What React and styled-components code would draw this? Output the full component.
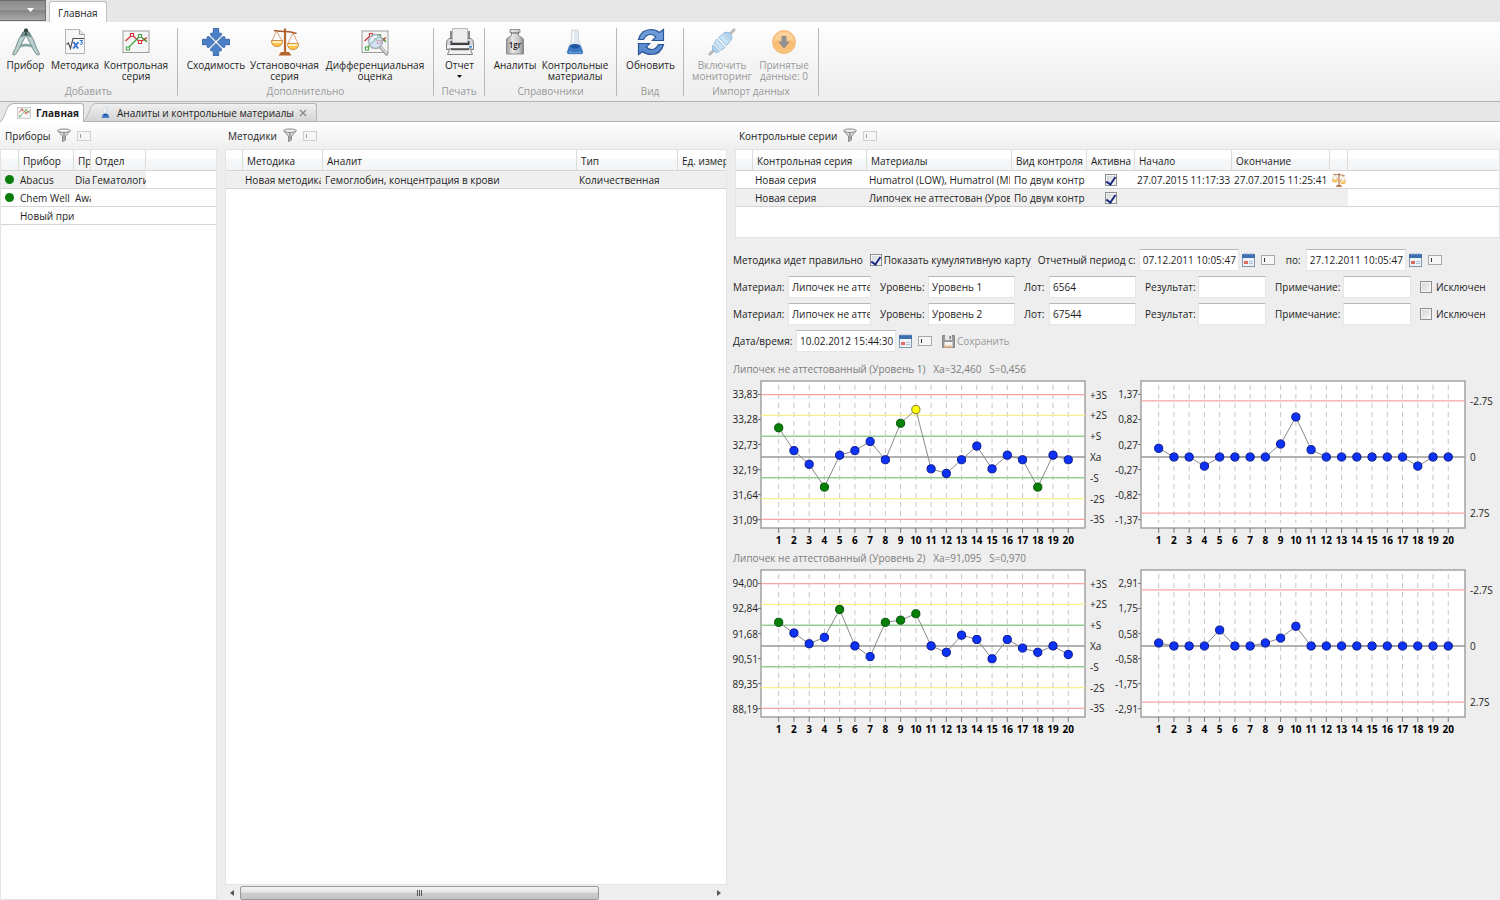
import React from "react";
import styled, { createGlobalStyle } from "styled-components";

const GlobalStyle = createGlobalStyle`
  * {
    box-sizing: border-box;
  }

  body {
    margin: 0;
    background: #eee;
    color: #1c1c1c;
    font: 10px/12px "Open Sans", "Noto Sans", sans-serif;
  }

  button,
  input {
    font: inherit;
    color: inherit;
  }

  button {
    border: 0;
    padding: 0;
    background: none;
  }

  svg {
    display: block;
    flex: none;
  }
`;

const Page = styled.div`
  display: flex;
  flex-direction: column;
  min-height: 100vh;
`;

/* ---------- ribbon ---------- */

const TitleBar = styled.header`
  display: flex;
  align-items: flex-end;
  gap: 3px;
  height: 22px;
  background: #e7e7e7;
`;

const AppMenuButton = styled.button`
  display: flex;
  align-items: center;
  justify-content: flex-end;
  align-self: flex-start;
  width: 46px;
  height: 21px;
  padding-right: 11px;
  border: 1px solid #6f6f6f;
  border-left: 0;
  background: linear-gradient(#8a8a8a, #9d9d9d 45%, #858585 50%, #a9a9a9);
`;

const RibbonTab = styled.button`
  height: 21px;
  padding: 2px 8px 0;
  border: 1px solid #c0c0c0;
  border-bottom: 0;
  border-radius: 3px 3px 0 0;
  background: #fff;
`;

const Ribbon = styled.nav`
  display: flex;
  padding: 6px 0 5px;
  border-bottom: 1px solid #b4b4b4;
  background: linear-gradient(#fff, #f3f3f3 60%, #eee);
`;

const RibbonGroup = styled.section`
  display: flex;
  flex-direction: column;
  justify-content: space-between;
  width: ${(p) => p.$width}px;
  height: 68px;
  border-right: 1px solid #b9b9b9;
`;

const GroupButtons = styled.div`
  display: flex;
  padding-left: ${(p) => p.$indent || 0}px;
`;

const GroupTitle = styled.div`
  color: #999;
  line-height: 9px;
  text-align: center;
`;

const RibbonButton = styled.button`
  display: flex;
  flex-direction: column;
  align-items: center;
  gap: 4px;
  width: ${(p) => p.$width}px;
  line-height: 11px;
  white-space: pre;

  &:disabled {
    color: #999;
  }

  &:disabled svg {
    opacity: 0.6;
  }
`;

/* ---------- document tabs ---------- */

const DocTabs = styled.div`
  display: flex;
  align-items: flex-end;
  height: 20px;
  border-bottom: 1px solid #b4b4b4;
  background: #e7e7e7;
`;

const DocTab = styled.div`
  display: flex;
  height: ${(p) => (p.$active ? 19 : 18)}px;
  margin-bottom: ${(p) => (p.$active ? -1 : 0)}px;
  font-weight: ${(p) => (p.$active ? 700 : 400)};
`;

const DocTabBody = styled.div`
  display: flex;
  align-items: center;
  gap: 5px;
  padding-right: ${(p) => (p.$active ? 4 : 9)}px;
  border: solid #b4b4b4;
  border-width: 1px 1px 0 0;
  border-radius: 0 3px 0 0;
  background: ${(p) => (p.$active ? "#fff" : "linear-gradient(#f0f0f0, #d4d4d4)")};

  button {
    font-weight: inherit;
  }
`;

/* ---------- panels and tables ---------- */

const Workspace = styled.main`
  display: flex;
  flex: 1;
  background: linear-gradient(#fff, #eee 28px);
`;

const Panel = styled.section`
  display: flex;
  flex-direction: column;
  flex: ${(p) => p.$grow} 1 0;
  min-width: 0;
  margin-left: ${(p) => p.$gap || 0}px;
`;

const PanelHead = styled.div`
  display: flex;
  align-items: center;
  gap: 6px;
  height: 27px;
  padding-left: ${(p) => p.$indent}px;
`;

const PanelTitle = styled.h2`
  margin: 0;
  font-size: 10px;
  font-weight: 400;
`;

const TableBox = styled.div`
  flex: ${(p) => (p.$height ? "none" : "1 1 0")};
  height: ${(p) => (p.$height ? p.$height + "px" : "auto")};
  margin-left: ${(p) => p.$indent || 0}px;
  overflow: hidden;
  border: 1px solid #e4e4e4;
  background: #fff;
`;

const Table = styled.table`
  width: ${(p) => p.$width || "100%"};
  border-collapse: separate;
  border-spacing: 0;
  table-layout: fixed;
`;

const Th = styled.th`
  height: 21px;
  padding: 1px 0 0 4px;
  overflow: hidden;
  border-right: 1px solid #dcdcdc;
  border-bottom: 1px solid #d5d5d5;
  background: linear-gradient(#fff 40%, #f7f8f9 45%, #f3f4f6);
  font-weight: 400;
  text-align: left;
  white-space: nowrap;

  &:last-child {
    border-right: 0;
  }
`;

const Td = styled.td`
  height: 18px;
  padding: 0 ${(p) => (p.$tight ? 0 : 2)}px 0 ${(p) => (p.$tight ? 1 : 2)}px;
  border-bottom: 1px solid #d5d5d5;
  background: ${(p) => (p.$selected ? "#efefef" : "#fff")};
`;

const CellText = styled.div`
  overflow: hidden;
  white-space: nowrap;
`;

const Center = styled.div`
  display: flex;
  justify-content: center;
`;

const StatusDot = styled.span`
  display: block;
  width: 9px;
  height: 9px;
  margin-left: 3px;
  border-radius: 50%;
  background: #0a7d0a;
`;

/* small "collapsed editor" box that stands next to filters and dates */
const MiniToggle = styled.button`
  display: flex;
  align-items: center;
  width: 14px;
  height: 10px;
  padding-left: 2px;
  border: 1px solid ${(p) => (p.$faint ? "#d0d0d0" : "#a8a8a8")};
  background: #f6f6f6;

  &::before {
    content: "";
    width: 1px;
    height: 4px;
    background: ${(p) => (p.$faint ? "#999" : "#333")};
  }
`;

const ScrollBar = styled.div`
  display: flex;
  align-items: center;
  height: 15px;
  padding: 0 6px 0 5px;
  background: #eee;
`;

const ScrollTrack = styled.div`
  flex: 1;
  height: 14px;
  margin: 0 16px 0 5px;
`;

const ScrollThumb = styled.div`
  display: flex;
  align-items: center;
  justify-content: center;
  gap: 1px;
  width: 78%;
  height: 14px;
  border: 1px solid #999;
  border-radius: 2px;
  background: linear-gradient(#f4f4f4, #e4e4e4 45%, #cdcdcd 50%, #c4c4c4);

  i {
    width: 1px;
    height: 6px;
    background: #555;
  }
`;

/* ---------- form ---------- */

const Form = styled.form`
  display: flex;
  flex-direction: column;
  gap: 5px;
  padding: 11px 7px 0 6px;
`;

const FormRow = styled.div`
  display: flex;
  align-items: center;
  gap: ${(p) => p.$gap || 9}px;
  height: 22px;
  white-space: nowrap;
`;

const Field = styled.label`
  display: flex;
  align-items: center;

  span {
    width: ${(p) => p.$label}px;
  }
`;

const TextInput = styled.input`
  width: ${(p) => p.$width}px;
  height: 22px;
  padding: 0 0 0 3px;
  border: 1px solid #e6e6e6;
  border-top-color: #b8b8b8;
  background: #fff;
  outline: 0;
`;

const CheckInput = styled.input`
  appearance: none;
  display: flex;
  justify-content: center;
  width: 12px;
  height: 12px;
  margin: 0;
  border: 1px solid #8e8f8f;
  background: linear-gradient(135deg, #cfd3d8, #f8f8f8);
  box-shadow: inset 0 0 0 1px #f4f4f4;

  &:checked::after {
    content: "";
    width: 4px;
    height: 8px;
    border: solid #1c2a80;
    border-width: 0 2px 2px 0;
    transform: rotate(35deg);
  }
`;

const CheckLabel = styled.label`
  display: flex;
  align-items: center;
  gap: ${(p) => p.$gap || 2}px;
`;

const DateTools = styled.div`
  display: flex;
  align-items: center;
  gap: 6px;
  margin: 0 4px 0 -4px;
`;

const SaveButton = styled.button`
  display: flex;
  align-items: center;
  gap: 2px;
  margin-left: 4px;

  &:disabled {
    color: #999;
  }
`;

/* ---------- charts ---------- */

const Charts = styled.div`
  display: flex;
  flex-direction: column;
  padding: 9px 7px 0 6px;
`;

const ChartTitle = styled.h3`
  margin: 0;
  color: #7c7c7c;
  font-size: 10px;
  font-weight: 400;
  line-height: 16px;
  white-space: pre;
`;

const ChartPair = styled.div`
  display: grid;
  grid-template-columns: 1fr 1fr;
`;

const ChartSvg = styled.svg`
  width: 100%;
  overflow: visible;

  text {
    fill: #1c1c1c;
    font-size: 10px;
  }

  .x {
    fill: #000;
    font-weight: 700;
    text-anchor: middle;
  }

  .tick {
    text-anchor: end;
  }
`;

/* ---------- icons ---------- */

const CompassIcon = () => (
  <svg width="28" height="28" viewBox="0 0 28 28">
    <path d="M6.500 17.500Q14 14.500 21.500 17.500L22 19.500Q14 16.500 6 19.500Z" fill="#86a9a7" stroke="#6d908d" strokeWidth="0.500" />
    <path d="M10.500 5L14.500 6Q10.500 14 6.500 22L3.500 26.500L1 27L0.800 25L3.500 20Q6 11 10.500 5Z" fill="#b7cfcd" stroke="#64827f" strokeWidth="0.800" />
    <path d="M17.500 5L13.500 6Q17.500 14 21.500 22L24.500 26.500L27 27L27.200 25L24.500 20Q22 11 17.500 5Z" fill="#b7cfcd" stroke="#64827f" strokeWidth="0.800" />
    <path d="M11 4Q14 1.500 17 4L18.500 8.500Q14 5.500 9.500 8.500Z" fill="#7b9d9b" stroke="#4b6663" strokeWidth="0.700" />
    <rect x="12" y="0.500" width="4" height="4" rx="1.500" fill="#344646" />
    <circle cx="14" cy="6" r="1.300" fill="#3a4c4b" />
  </svg>
);

const FormulaIcon = () => (
  <svg width="28" height="28" viewBox="0 0 28 28">
    <path d="M4.500 1.500H18.500L23.500 6.500V25.500H4.500Z" fill="#f7f7f7" stroke="#b5b5b5" />
    <path d="M18.500 1.500V6.500H23.500" fill="#e4e4e4" stroke="#a5a5a5" />
    <path d="M5.500 16.500L7.500 15L9.500 20.500L12 10.500H23" fill="none" stroke="#4d4d4d" strokeWidth="1.100" />
    <path d="M12.500 14L17 20.500M17.500 14L12 20.500" stroke="#2f6fd0" strokeWidth="1.800" />
    <path d="M18.700 12.500H21.500L20 14.200Q22 14.300 21.500 15.700Q20.800 17 18.700 16" fill="none" stroke="#2f6fd0" strokeWidth="1" />
  </svg>
);

const SeriesShape = () => (
  <>
    <rect x="1" y="3" width="26" height="21.500" fill="#f5f5f5" stroke="#9d9d9d" />
    <path d="M3.500 13L10 7L18 14L25 9.500" fill="none" stroke="#cf3838" strokeWidth="1.300" />
    <path d="M6 20L18 8L25 14" fill="none" stroke="#48a548" strokeWidth="1.300" />
    <path d="M8.500 5.500h3v3h-3ZM16.500 12.500h3v3h-3Z" fill="#fff" stroke="#cf3838" strokeWidth="1.200" />
    <path d="M4.500 19h3v3h-3ZM16.500 6.500h3v3h-3Z" fill="#fff" stroke="#48a548" strokeWidth="1.200" />
    <path d="M21.500 10l3 3M24.500 10l-3 3" stroke="#8a6a2c" />
  </>
);

const SeriesIcon = ({ size = 28 }) => (
  <svg width={size} height={size} viewBox="0 0 28 28">
    <SeriesShape />
  </svg>
);

const DiffIcon = () => (
  <svg width="28" height="28" viewBox="0 0 28 28">
    <SeriesShape />
    <path d="M19.500 19L25.500 26" stroke="#9c9c9c" strokeWidth="3.400" strokeLinecap="round" />
    <path d="M19.500 18.500L25.500 25.500" stroke="#e2e2e2" strokeWidth="1.200" strokeLinecap="round" />
    <circle cx="14.500" cy="13.500" r="7" fill="#c6dcf3" fillOpacity="0.700" stroke="#a9b0b8" strokeWidth="1.500" />
    <path d="M9.500 13Q11 8.500 16 8.700" fill="none" stroke="#fff" strokeWidth="1.500" />
  </svg>
);

const ConvergeIcon = () => (
  <svg width="28" height="28" viewBox="0 0 28 28">
    {[0, 90, 180, 270].map((a) => (
      <path
        key={a}
        transform={`rotate(${a} 14 14)`}
        d="M11.300 0.500H16.700V5.200H19.300V7.300L14 12.600L8.700 7.300V5.200H11.300Z"
        fill="#4b80c9"
        stroke="#2c5ba3"
        strokeWidth="0.800"
      />
    ))}
  </svg>
);

const ScalesIcon = ({ size = 28 }) => (
  <svg width={size} height={size} viewBox="0 0 28 28">
    <path d="M12.900 0.500H15.100V24.500H12.900Z" fill="#b5652d" />
    <path d="M3 2.500Q8 3.500 14 3.500Q20 3.500 25.500 5.500" fill="none" stroke="#a5582a" strokeWidth="1.600" />
    <path d="M5.500 3L1.200 12.500M5.500 3L11 12.500M22 5L17 15.500M22 5L27 15.500" fill="none" stroke="#c88a58" strokeWidth="0.800" />
    <path d="M0.500 12.500H11.500Q11.500 18.500 6 18.500Q0.500 18.500 0.500 12.500Z" fill="#ffc64a" stroke="#c77a26" strokeWidth="0.800" />
    <path d="M16.500 15.500H27.500Q27.500 21.500 22 21.500Q16.500 21.500 16.500 15.500Z" fill="#ffc64a" stroke="#c77a26" strokeWidth="0.800" />
    <path d="M1.500 14H10.500M17.500 17H26.500" stroke="#fff1bd" strokeWidth="1.800" />
    <path d="M10 24H18L20.500 27.500H7.500Z" fill="#b5652d" />
  </svg>
);

const PrinterIcon = () => (
  <svg width="28" height="28" viewBox="0 0 28 28">
    <path d="M4 3H6V12H4ZM22 3H24V12H22Z" fill="#888" />
    <path d="M3 10.500H25Q27.500 12 27.500 15V21.500H0.500V15Q0.500 12 3 10.500Z" fill="#d3d5d8" stroke="#7b7b7b" />
    <path d="M4.500 13H23.500V17H4.500Z" fill="#3c3f44" />
    <path d="M6.500 0.500H21.500V14.500H6.500Z" fill="#ececec" stroke="#b9b9b9" />
    <path d="M1 17.500H27V20H1Z" fill="#f5f5f5" />
    <path d="M4 20.500H24L26.500 26.500H1.500Z" fill="#f1f1f1" stroke="#868686" />
    <path d="M5 21.500H23" stroke="#555" strokeWidth="1.400" />
    <path d="M23 18.800h3" stroke="#3f7fe0" strokeWidth="1.600" />
  </svg>
);

const BottleIcon = () => (
  <svg width="28" height="28" viewBox="0 0 28 28">
    <defs>
      <linearGradient id="steel">
        <stop offset="0" stopColor="#9a9a9a" />
        <stop offset="0.350" stopColor="#e6e6e6" />
        <stop offset="0.750" stopColor="#c4c4c4" />
        <stop offset="1" stopColor="#858585" />
      </linearGradient>
    </defs>
    <path d="M9 1.500H19V4.500H17.500V7Q18 8.500 21 9.500Q22.500 10.500 22.500 12V26H5.500V12Q5.500 10.500 7 9.500Q10 8.500 10.500 7V4.500H9Z" fill="url(#steel)" stroke="#7b7b7b" strokeWidth="0.800" />
    <path d="M10 5H18" stroke="#5a5a5a" />
    <text x="14" y="20" fontSize="8" fontWeight="600" textAnchor="middle" fill="#1a1a1a">1gr</text>
  </svg>
);

const FlaskIcon = ({ size = 28 }) => (
  <svg width={size} height={size} viewBox="0 0 28 28">
    <path d="M10.500 2H17.500V11L22 24Q22 26 20.500 26H7.500Q6 26 6 24L10.500 11Z" fill="#dfe8ee" stroke="#ccd5db" strokeWidth="0.800" />
    <path d="M8.300 17.500Q14 19 19.700 17.500L22 24Q22 26 20.500 26H7.500Q6 26 6 24Z" fill="#3b76c2" />
    <path d="M9 17Q14 15 19 17Q18.500 20.500 14 20.500Q9.500 20.500 9 17Z" fill="#1f54a0" />
    <path d="M8 23Q14 25.500 20 23V25H8Z" fill="#6fa0dc" />
    <path d="M12.300 3V14" stroke="#fff" strokeWidth="1.500" />
  </svg>
);

const RefreshIcon = () => (
  <svg width="28" height="28" viewBox="0 0 28 28">
    <path d="M1.500 11.500Q4 1.500 14 1.500Q19 1.500 22.500 4.500L26.500 1.500V12.500H15.500L18.800 9Q16.500 6.500 13.500 6.500Q9 6.500 6.500 11.500Z" fill="#6c9bd9" stroke="#2b5596" strokeWidth="1.200" />
    <path d="M26.500 16.500Q24 26.500 14 26.500Q9 26.500 5.500 23.500L1.500 26.500V15.500H12.500L9.200 19Q11.500 21.500 14.500 21.500Q19 21.500 21.500 16.500Z" fill="#5a8ccf" stroke="#2b5596" strokeWidth="1.200" />
  </svg>
);

const PlugIcon = () => (
  <svg width="28" height="28" viewBox="0 0 28 28">
    <path d="M1 27L6 22M22 6L27 1" stroke="#8c8c8c" strokeWidth="2.600" />
    <path d="M5 17L11.500 23.500Q8 26 5.500 23Q3 20 5 17Z" fill="#7cbcec" stroke="#4c8ec4" strokeWidth="0.900" />
    <path d="M6 15.500L13 22.500L17 19.500L9 11Z" fill="#a6d5f6" stroke="#4c8ec4" strokeWidth="0.900" />
    <path d="M10.500 9.500L18.500 17.500L22 13.500L14.500 6Z" fill="#a6d5f6" stroke="#4c8ec4" strokeWidth="0.900" />
    <path d="M15.500 5L23 12.500Q25 8.500 22.500 5.500Q19 3 15.500 5Z" fill="#7cbcec" stroke="#4c8ec4" strokeWidth="0.900" />
  </svg>
);

const DownloadIcon = () => (
  <svg width="28" height="28" viewBox="0 0 28 28">
    <circle cx="14" cy="14" r="11.500" fill="#f99a20" stroke="#e8953a" />
    <path d="M4 13Q5 4 14 4Q23 4 24 13Q14 10 4 13Z" fill="#fbb75e" />
    <path d="M11.500 8H16.500V13.500H20L14 20.500L8 13.500H11.500Z" fill="#4c4c4c" />
  </svg>
);

const FunnelIcon = () => (
  <svg width="14" height="15" viewBox="0 0 14 15">
    <path d="M0.800 2.800L5.500 8.200V13.500L8.500 12V8.200L13.200 2.800Z" fill="#dedede" stroke="#858585" />
    <ellipse cx="7" cy="2.700" rx="6.200" ry="1.700" fill="#f4f4f4" stroke="#777" strokeWidth="0.900" />
    <path d="M7 5V11.500" stroke="#6a6a6a" />
  </svg>
);

const CalendarIcon = () => (
  <svg width="13" height="14" viewBox="0 0 13 14">
    <rect x="0.500" y="1.500" width="12" height="12" fill="#eef3f8" stroke="#8397ad" />
    <rect x="0" y="1" width="13" height="4" fill="#3d6fb0" />
    <path d="M2.500 0V2M5 0V2M8 0V2M10.500 0V2" stroke="#8ba3c6" />
    <rect x="2" y="8" width="4" height="3" fill="#dd6a60" />
    <path d="M7 8.500H11M7 10.500H11" stroke="#a9c3dd" />
  </svg>
);

const SaveIcon = () => (
  <svg width="13" height="13" viewBox="0 0 13 13">
    <path d="M0.500 0.500H12.500V12.500H0.500Z" fill="#9a9a9a" stroke="#868686" />
    <path d="M3 0H10V5H3Z" fill="#e8e8e8" />
    <path d="M7.500 1H9V4H7.500Z" fill="#777" />
    <path d="M2.500 7H10.500V12H2.500Z" fill="#f4f4f4" />
    <path d="M2.500 10.500H10.500V12.500H2.500Z" fill="#eebb88" />
  </svg>
);

const Arrow = ({ d, w = 7, h = 5, fill = "#111" }) => (
  <svg width={w} height={h} viewBox={`0 0 ${w} ${h}`}>
    <path d={d} fill={fill} />
  </svg>
);

const TabSlope = ({ active }) => (
  <svg width={active ? 17 : 15} height={active ? 19 : 18} viewBox="0 0 20 18" preserveAspectRatio="none">
    <defs>
      <linearGradient id="slope" x2="0" y2="1">
        <stop offset="0" stopColor="#f0f0f0" />
        <stop offset="1" stopColor="#d4d4d4" />
      </linearGradient>
    </defs>
    <path d="M0 18Q4 15 7 8Q10 0.500 16 0.500H20V18Z" fill={active ? "#fff" : "url(#slope)"} />
    <path d="M0 18Q4 15 7 8Q10 0.500 16 0.500H20" fill="none" stroke="#b4b4b4" />
  </svg>
);

/* ---------- data ---------- */

const ribbon = [
  {
    title: "Добавить",
    width: 178,
    buttons: [
      { text: "Прибор", width: 51, icon: <CompassIcon /> },
      { text: "Методика", width: 48, icon: <FormulaIcon /> },
      { text: "Контрольная\nсерия", width: 74, icon: <SeriesIcon /> },
    ],
  },
  {
    title: "Дополнительно",
    width: 256,
    indent: 5,
    buttons: [
      { text: "Сходимость", width: 66, icon: <ConvergeIcon /> },
      { text: "Установочная\nсерия", width: 71, icon: <ScalesIcon /> },
      { text: "Дифференциальная\nоценка", width: 110, icon: <DiffIcon /> },
    ],
  },
  {
    title: "Печать",
    width: 51,
    indent: 1,
    buttons: [{ text: "Отчет", width: 51, icon: <PrinterIcon />, menu: true }],
  },
  {
    title: "Справочники",
    width: 132,
    indent: 4,
    buttons: [
      { text: "Аналиты", width: 52, icon: <BottleIcon /> },
      { text: "Контрольные\nматериалы", width: 68, icon: <FlaskIcon /> },
    ],
  },
  {
    title: "Вид",
    width: 67,
    indent: 1,
    buttons: [{ text: "Обновить", width: 66, icon: <RefreshIcon /> }],
  },
  {
    title: "Импорт данных",
    width: 135,
    indent: 5,
    buttons: [
      { text: "Включить\nмониторинг", width: 66, icon: <PlugIcon />, disabled: true },
      { text: "Принятые\nданные: 0", width: 58, icon: <DownloadIcon />, disabled: true },
    ],
  },
];

const deviceCols = [
  { title: "", width: 18 },
  { title: "Прибор", width: 55 },
  { title: "Пр", width: 17 },
  { title: "Отдел", width: 55 },
  { title: "" },
];

const deviceRows = [
  { selected: true, cells: [<StatusDot />, "Abacus", "Dia", "Гематология"] },
  { cells: [<StatusDot />, "Chem Well", "Awa", ""] },
  { cells: ["", "Новый прибор", "", ""] },
];

const methodCols = [
  { title: "", width: 17 },
  { title: "Методика", width: 80 },
  { title: "Аналит", width: 254 },
  { title: "Тип", width: 101 },
  { title: "Ед. измерения", width: 180 },
];

const methodRows = [
  { selected: true, cells: ["", "Новая методика", "Гемоглобин, концентрация в крови", "Количественная", ""] },
];

const seriesCols = [
  { title: "", width: 17 },
  { title: "Контрольная серия", width: 114 },
  { title: "Материалы", width: 145 },
  { title: "Вид контроля", width: 75 },
  { title: "Активна", width: 48 },
  { title: "Начало", width: 97 },
  { title: "Окончание", width: 98 },
  { title: "", width: 18 },
  { title: "" },
];

const ActiveCheck = () => (
  <Center>
    <CheckInput type="checkbox" defaultChecked aria-label="Активна" />
  </Center>
);

const seriesRows = [
  {
    cells: [
      "",
      "Новая серия",
      "Humatrol (LOW), Humatrol (MID)",
      "По двум контролям",
      <ActiveCheck />,
      "27.07.2015 11:17:33",
      "27.07.2015 11:25:41",
      <ScalesIcon size={14} />,
    ],
  },
  {
    selected: true,
    cells: ["", "Новая серия", "Липочек не аттестован (Уровень 1)", "По двум контролям", <ActiveCheck />, "", "", ""],
  },
];

const materials = [
  { level: "Уровень 1", lot: "6564" },
  { level: "Уровень 2", lot: "67544" },
];

const levelLines = [
  { s: 3, label: "+3S", color: "#f8a5a5" },
  { s: 2, label: "+2S", color: "#f5f28c" },
  { s: 1, label: "+S", color: "#95cd95" },
  { s: 0, label: "Xa", color: "#999" },
  { s: -1, label: "-S", color: "#95cd95" },
  { s: -2, label: "-2S", color: "#f5f28c" },
  { s: -3, label: "-3S", color: "#f8a5a5" },
];

const cusumLines = [
  { s: 2.7, label: "-2.7S", color: "#f8a5a5" },
  { s: 0, label: "0", color: "#999" },
  { s: -2.7, label: "2.7S", color: "#f8a5a5" },
];

const charts = [
  {
    title: "Липочек не аттестованный (Уровень 1)   Xa=32,460   S=0,456",
    mean: 32.46,
    s: 0.456,
    ticks: ["33,83", "33,28", "32,73", "32,19", "31,64", "31,09"],
    values: [33.1, 32.6, 32.3, 31.8, 32.5, 32.6, 32.8, 32.4, 33.2, 33.5, 32.2, 32.1, 32.4, 32.7, 32.2, 32.5, 32.4, 31.8, 32.5, 32.4],
    cusumTicks: ["1,37", "0,82", "0,27", "-0,27", "-0,82", "-1,37"],
    cusum: [0.19, 0, 0, -0.2, 0, 0, 0, 0, 0.285, 0.877, 0.16, 0, 0, 0, 0, 0, 0, -0.2, 0, 0],
  },
  {
    title: "Липочек не аттестованный (Уровень 2)   Xa=91,095   S=0,970",
    mean: 91.095,
    s: 0.97,
    ticks: ["94,00", "92,84", "91,68", "90,51", "89,35", "88,19"],
    values: [92.2, 91.7, 91.2, 91.5, 92.8, 91.1, 90.6, 92.2, 92.3, 92.6, 91.1, 90.8, 91.6, 91.4, 90.5, 91.4, 91, 90.8, 91.1, 90.7],
    cusumTicks: ["2,91", "1,75", "0,58", "-0,58", "-1,75", "-2,91"],
    cusum: [0.14, 0, 0, 0, 0.745, 0, 0, 0.14, 0.37, 0.92, 0, 0, 0, 0, 0, 0, 0, 0, 0, 0],
  },
];

/* ---------- components ---------- */

const DataTable = ({ cols, rows, width, tight }) => (
  <Table $width={width}>
    <colgroup>
      {cols.map((c, i) => (
        <col key={i} width={c.width} />
      ))}
    </colgroup>
    <thead>
      <tr>
        {cols.map((c, i) => (
          <Th key={i}>{c.title}</Th>
        ))}
      </tr>
    </thead>
    <tbody>
      {rows.map((row, r) => (
        <tr key={r}>
          {cols.map((c, i) => (
            <Td key={i} $tight={tight} $selected={row.selected && i < row.cells.length}>
              <CellText>{row.cells[i]}</CellText>
            </Td>
          ))}
        </tr>
      ))}
    </tbody>
  </Table>
);

const PanelHeader = ({ title, indent }) => (
  <PanelHead $indent={indent}>
    <PanelTitle>{title}</PanelTitle>
    <FunnelIcon />
    <MiniToggle $faint aria-label="Фильтр" />
  </PanelHead>
);

const pointColor = (z) => {
  if (Math.abs(z) >= 2) return ["#ffff00", "#8a7a20"];
  if (Math.abs(z) >= 1) return ["#078007", "#055205"];
  return ["#0b32f5", "#08158c"];
};

const ControlChart = ({ mean, s, values, ticks, lines, plain }) => {
  const left = 28;
  const right = 352;
  const mid = 80;
  const unit = 20.8;
  const x = (i) => 45.7 + i * 15.24;
  const y = (v) => mid - ((v - mean) / s) * unit;
  const tickY = (i) => 17.4 + i * 25.05;

  return (
    <ChartSvg viewBox="0 0 380 173">
      <rect x={left} y="4" width={right - left} height="147" fill="#fff" stroke="#969696" strokeWidth="1.3" />
      {values.map((v, i) => (
        <path key={i} d={`M${x(i)} 8V146`} stroke="#c6c6c6" strokeDasharray="5 4" />
      ))}
      {lines.map((l) => (
        <g key={l.label}>
          <path d={`M${left} ${mid - l.s * unit}H${right}`} stroke={l.color} strokeWidth="1.4" />
          <text x={right + 5} y={mid - l.s * unit + 4}>{l.label}</text>
        </g>
      ))}
      {ticks.map((t, i) => (
        <g key={t}>
          <path d={`M${left - 3} ${tickY(i)}H${left}`} stroke="#777" />
          <text className="tick" x={left - 3} y={tickY(i) + 4}>{t}</text>
        </g>
      ))}
      <polyline points={values.map((v, i) => `${x(i)},${y(v)}`).join(" ")} fill="none" stroke="#8a8a8a" />
      {values.map((v, i) => {
        const [fill, stroke] = pointColor(plain ? 0 : (v - mean) / s);
        return (
          <g key={i}>
            <circle cx={x(i)} cy={y(v)} r="4.1" fill={fill} stroke={stroke} />
            <path d={`M${x(i)} 151V156`} stroke="#777" />
            <text className="x" x={x(i)} y="167">{i + 1}</text>
          </g>
        );
      })}
    </ChartSvg>
  );
};

const App = () => (
  <Page>
    <GlobalStyle />
    <TitleBar>
      <AppMenuButton aria-label="Меню">
        <Arrow d="M0 0H7L3.5 4Z" fill="#fff" />
      </AppMenuButton>
      <RibbonTab>Главная</RibbonTab>
    </TitleBar>

    <Ribbon>
      {ribbon.map((g) => (
        <RibbonGroup key={g.title} $width={g.width}>
          <GroupButtons $indent={g.indent}>
            {g.buttons.map((b) => (
              <RibbonButton key={b.text} $width={b.width} disabled={b.disabled}>
                {b.icon}
                {b.text}
                {b.menu && <Arrow d="M0 0H5L2.5 3Z" w={5} h={3} />}
              </RibbonButton>
            ))}
          </GroupButtons>
          <GroupTitle>{g.title}</GroupTitle>
        </RibbonGroup>
      ))}
    </Ribbon>

    <DocTabs>
      <DocTab $active>
        <TabSlope active />
        <DocTabBody $active>
          <SeriesIcon size={14} />
          <button>Главная</button>
        </DocTabBody>
      </DocTab>
      <DocTab>
        <TabSlope />
        <DocTabBody>
          <FlaskIcon size={13} />
          <button>Аналиты и контрольные материалы</button>
          <button aria-label="Закрыть">
            <svg width="8" height="8" viewBox="0 0 8 8">
              <path d="M1 1L7 7M7 1L1 7" stroke="#888" strokeWidth="1.3" />
            </svg>
          </button>
        </DocTabBody>
      </DocTab>
    </DocTabs>

    <Workspace>
      <Panel $grow={217}>
        <PanelHeader title="Приборы" indent={5} />
        <TableBox>
          <DataTable cols={deviceCols} rows={deviceRows} tight />
        </TableBox>
      </Panel>

      <Panel $grow={502} $gap={8}>
        <PanelHeader title="Методики" indent={3} />
        <TableBox>
          <DataTable cols={methodCols} rows={methodRows} width="632px" />
        </TableBox>
        <ScrollBar>
          <Arrow d="M4 0V6L0 3Z" w={5} h={6} fill="#555" />
          <ScrollTrack>
            <ScrollThumb>
              <i />
              <i />
              <i />
            </ScrollThumb>
          </ScrollTrack>
          <Arrow d="M1 0V6L5 3Z" w={5} h={6} fill="#555" />
        </ScrollBar>
      </Panel>

      <Panel $grow={773}>
        <PanelHeader title="Контрольные серии" indent={12} />
        <TableBox $height={89} $indent={8}>
          <DataTable cols={seriesCols} rows={seriesRows} />
        </TableBox>

        <Form>
          <FormRow $gap={7}>
            <span>Методика идет правильно</span>
            <CheckLabel>
              <CheckInput type="checkbox" defaultChecked />
              Показать кумулятивную карту
            </CheckLabel>
            <Field $label={101}>
              <span>Отчетный период с:</span>
              <TextInput $width={100} defaultValue="07.12.2011 10:05:47" />
            </Field>
            <DateTools>
              <CalendarIcon />
              <MiniToggle type="button" aria-label="Начало периода" />
            </DateTools>
            <Field $label={20}>
              <span>по:</span>
              <TextInput $width={100} defaultValue="27.12.2011 10:05:47" />
            </Field>
            <DateTools>
              <CalendarIcon />
              <MiniToggle type="button" aria-label="Конец периода" />
            </DateTools>
          </FormRow>
          {materials.map((m) => (
            <FormRow key={m.lot}>
              <Field $label={55}>
                <span>Материал:</span>
                <TextInput $width={83} defaultValue="Липочек не аттестованный" />
              </Field>
              <Field $label={48}>
                <span>Уровень:</span>
                <TextInput $width={87} defaultValue={m.level} />
              </Field>
              <Field $label={25}>
                <span>Лот:</span>
                <TextInput $width={87} defaultValue={m.lot} />
              </Field>
              <Field $label={53}>
                <span>Результат:</span>
                <TextInput $width={68} />
              </Field>
              <Field $label={68}>
                <span>Примечание:</span>
                <TextInput $width={68} />
              </Field>
              <CheckLabel $gap={4}>
                <CheckInput type="checkbox" />
                Исключен
              </CheckLabel>
            </FormRow>
          ))}
          <FormRow $gap={7}>
            <Field $label={63}>
              <span>Дата/время:</span>
              <TextInput $width={100} defaultValue="10.02.2012 15:44:30" />
            </Field>
            <DateTools>
              <CalendarIcon />
              <MiniToggle type="button" aria-label="Дата и время" />
              <SaveButton type="button" disabled>
                <SaveIcon />
                Сохранить
              </SaveButton>
            </DateTools>
          </FormRow>
        </Form>

        <Charts>
          {charts.map((c) => (
            <section key={c.title}>
              <ChartTitle>{c.title}</ChartTitle>
              <ChartPair>
                <ControlChart mean={c.mean} s={c.s} values={c.values} ticks={c.ticks} lines={levelLines} />
                <ControlChart mean={0} s={c.s} values={c.cusum} ticks={c.cusumTicks} lines={cusumLines} plain />
              </ChartPair>
            </section>
          ))}
        </Charts>
      </Panel>
    </Workspace>
  </Page>
);

export default App;
